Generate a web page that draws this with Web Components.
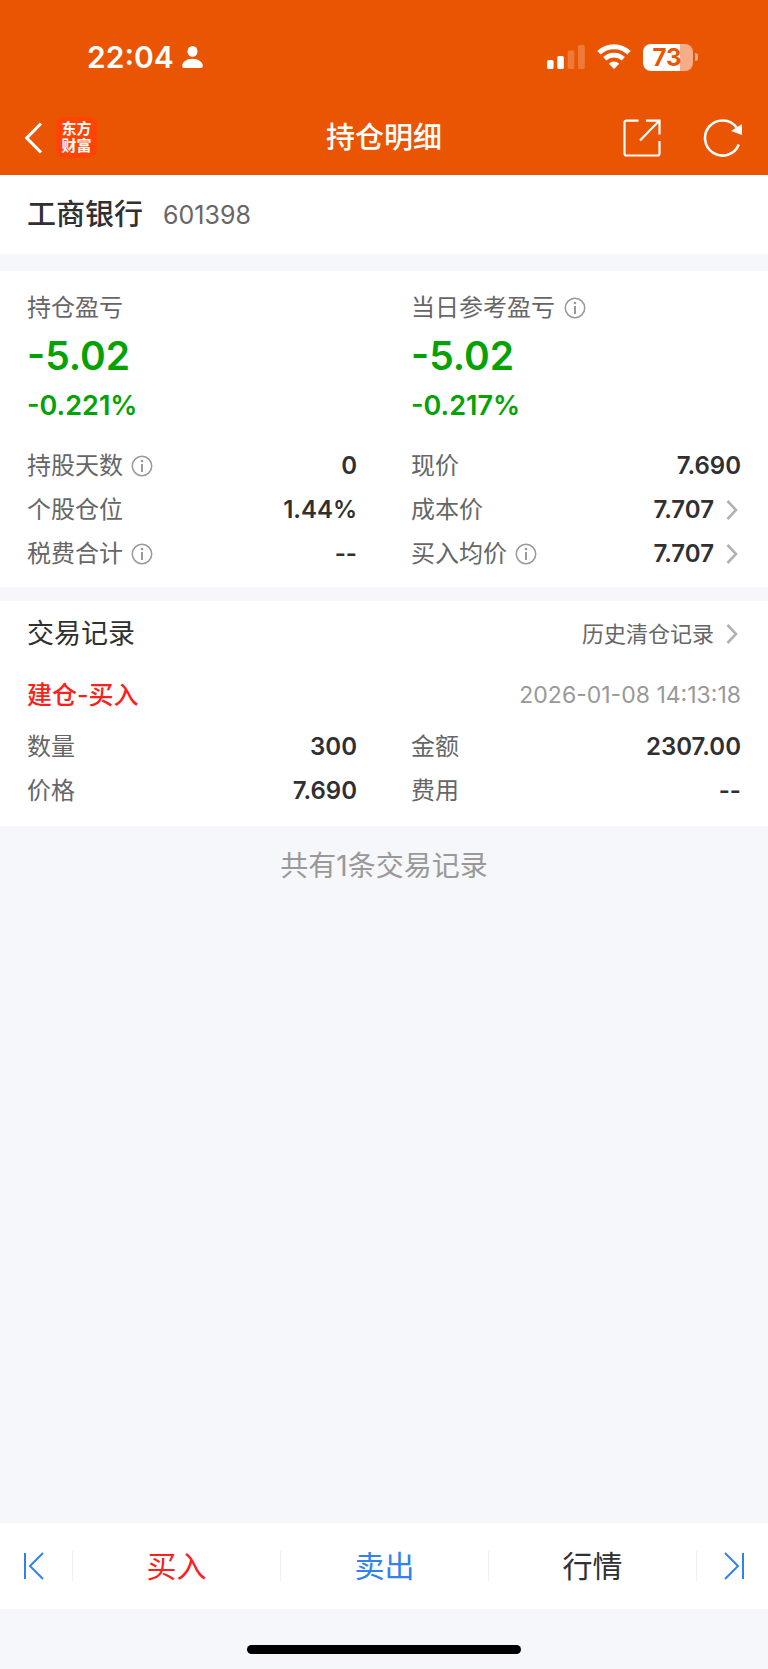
<!DOCTYPE html>
<html lang="zh-CN">
<head>
<meta charset="utf-8">
<meta name="viewport" content="width=device-width, initial-scale=1">
<title>持仓明细</title>
<style>
    :root{
        --orange: #ea5503;
        --green: #04a204;
        --red: #fb1f20;
        --blue: #3182ec;
        --bg: #f6f7fa;
        --text: #303030;
        --label: #666;
        --muted: #999;
    }
    body{
        margin: 0;
        min-height: 100vh;
        display: flex;
        flex-direction: column;
        background: var(--bg);
        color: var(--text);
        font-family: Inter, "Noto Sans CJK SC", sans-serif;
        font-size: 24px;
        line-height: 36px;
    }
    main{
        flex: 1;
    }
</style>
</head>
<body>
<status-bar hora="22:04" bateria="73"></status-bar>
<nav-bar>持仓明细</nav-bar>
<main>
    <stock-title codigo="601398">工商银行</stock-title>
    <info-card>
        <two-columns>
            <profit-figure titulo="持仓盈亏" valor="-5.02" porcentaje="-0.221%"></profit-figure>
            <profit-figure titulo="当日参考盈亏" valor="-5.02" porcentaje="-0.217%" info></profit-figure>
        </two-columns>
        <two-columns>
            <data-row titulo="持股天数" valor="0" info></data-row>
            <data-row titulo="现价" valor="7.690"></data-row>
            <data-row titulo="个股仓位" valor="1.44%"></data-row>
            <data-row titulo="成本价" valor="7.707" enlace></data-row>
            <data-row titulo="税费合计" valor="--" info></data-row>
            <data-row titulo="买入均价" valor="7.707" info enlace></data-row>
        </two-columns>
    </info-card>
    <trade-list titulo="交易记录" historial="历史清仓记录">
        <trade-record tipo="建仓-买入" fecha="2026-01-08 14:13:18">
            <data-row titulo="数量" valor="300"></data-row>
            <data-row titulo="金额" valor="2307.00"></data-row>
            <data-row titulo="价格" valor="7.690"></data-row>
            <data-row titulo="费用" valor="--"></data-row>
        </trade-record>
        <span slot="total">共有1条交易记录</span>
    </trade-list>
</main>
<tab-bar>
    <tab-item color="red">买入</tab-item>
    <tab-item color="blue">卖出</tab-item>
    <tab-item color="text">行情</tab-item>
</tab-bar>
<home-indicator></home-indicator>

<script>
const reset = `
    *{ box-sizing: border-box; }
    button{ margin: 0; padding: 0; border: 0; background: none; color: inherit; font: inherit; cursor: pointer; }
    a{ color: inherit; text-decoration: none; }
    svg{ display: block; flex: none; }
`;

const chevron = `
    <svg width="15" height="20" viewBox="0 0 15 20" fill="none" stroke="#b2b2b2" stroke-width="2.6" aria-hidden="true">
        <path d="M1.5 1L10 10L1.5 19"/>
    </svg>`;

class BaseElement extends HTMLElement{
    constructor(){
        super();
        this.attachShadow({mode: "open"});
    }
    attr(name){
        return this.getAttribute(name) || "";
    }
    connectedCallback(){
        const template = document.createElement('template');
        template.innerHTML = `<style>${reset}${this.getStyle()}</style>${this.getTemplate()}`;
        this.shadowRoot.replaceChildren(template.content.cloneNode(true));
    }
}

class StatusBar extends BaseElement{
    getTemplate(){
        return `
            <div class="group left">
                <time>${this.attr('hora')}</time>
                <svg width="21" height="22" viewBox="0 0 21 22" fill="#fff" aria-hidden="true">
                    <ellipse cx="10.5" cy="5.4" rx="5" ry="5.4"/>
                    <path d="M2.2 22Q.2 22 .2 20C.2 16.4 4.5 12.8 10.5 12.8S20.8 16.4 20.8 20Q20.8 22 18.8 22Z"/>
                </svg>
            </div>
            <div class="group right">
                <svg width="38" height="26" viewBox="0 0 38 26" fill="#fff" aria-hidden="true">
                    <rect x="0" y="16" width="6.6" height="9" rx="1.6"/>
                    <rect x="10.3" y="12" width="6.6" height="13" rx="1.6"/>
                    <rect x="20.7" y="6.5" width="6.6" height="18.5" rx="1.6" opacity=".22"/>
                    <rect x="31" y="1" width="6.8" height="24" rx="1.6" opacity=".22"/>
                </svg>
                <svg width="34" height="26" viewBox="0 0 34 26" fill="none" stroke="#fff" aria-hidden="true">
                    <path d="M2 8.8A21.5 21.5 0 0 1 32 8.8" stroke-width="5"/>
                    <path d="M7.7 14.8A13.7 13.7 0 0 1 26.3 14.8" stroke-width="4.6"/>
                    <path d="M17 25L11.8 19.7Q17 15.5 22.2 19.7Z" fill="#fff" stroke="none"/>
                </svg>
                <div class="battery"><b>${this.attr('bateria')}</b><i></i></div>
            </div>`;
    }
    getStyle(){
        return `
            :host{
                display: flex;
                justify-content: space-between;
                padding: 42px 70px 0 87px;
                background: var(--orange);
                color: #fff;
            }
            .group{ display: flex; align-items: center; height: 30px; }
            .left{ gap: 8px; }
            .right{ gap: 12px; }
            time{ font-size: 30px; line-height: 30px; font-weight: 600; }
            .battery{ display: flex; align-items: center; gap: 2px; }
            b{
                width: 50px;
                height: 27px;
                padding-right: 2px;
                border-radius: 8px;
                text-align: center;
                font-size: 24px;
                line-height: 27px;
                font-weight: 700;
                color: var(--orange);
                background: linear-gradient(90deg, #fff ${this.attr('bateria')}%, #f5ad87 0);
            }
            i{ width: 3px; height: 8px; border-radius: 0 3px 3px 0; background: #f5ad87; }
        `;
    }
}

class NavBar extends BaseElement{
    getTemplate(){
        return `
            <div class="side">
                <button aria-label="返回">
                    <svg width="18" height="32" viewBox="0 0 18 32" fill="none" stroke="#fff" stroke-width="3.2" aria-hidden="true">
                        <path d="M16 1.5L1.8 16L16 30.5"/>
                    </svg>
                </button>
                <a class="logo" href="#">东方<br>财富</a>
            </div>
            <h1><slot></slot></h1>
            <div class="side actions">
                <button aria-label="分享">
                    <svg width="38" height="38" viewBox="0 0 38 38" fill="none" stroke="#fff" stroke-width="2.2" aria-hidden="true">
                        <path d="M15.5 1.6H3.5Q1.5 1.6 1.5 3.6V34.500Q1.5 36.5 3.5 36.5H34.5Q36.5 36.5 36.5 34.5V22"/>
                        <path d="M23 1.6H36.5V15.5M36 2L17 21.5"/>
                    </svg>
                </button>
                <button aria-label="刷新">
                    <svg width="40" height="40" viewBox="0 0 40 40" fill="none" stroke="#fff" stroke-width="2.6" aria-hidden="true">
                        <path d="M35.8 26.5A17.5 17.5 0 1 1 33.5 9.5"/>
                        <path d="M39 6V17L28 13Z" fill="#fff" stroke="none"/>
                    </svg>
                </button>
            </div>`;
    }
    getStyle(){
        return `
            :host{
                display: grid;
                grid-template-columns: 1fr auto 1fr;
                align-items: center;
                padding: 45px 25px 17px;
                background: var(--orange);
                color: #fff;
            }
            .side{ display: flex; align-items: center; gap: 13px; }
            .actions{ justify-content: flex-end; gap: 42px; }
            h1{ margin: 0; font-size: 29px; line-height: 41px; font-weight: 500; }
            .logo{
                width: 41px;
                height: 41px;
                padding-top: 3px;
                border-radius: 8px;
                background: #ff4301;
                text-align: center;
                font-size: 15px;
                line-height: 17px;
                font-weight: 700;
            }
        `;
    }
}

class StockTitle extends BaseElement{
    getTemplate(){
        return `<h2><slot></slot></h2><span>${this.attr('codigo')}</span>`;
    }
    getStyle(){
        return `
            :host{ display: flex; align-items: center; gap: 20px; padding: 20px 27px 19px; background: #fff; }
            h2{ margin: 0; font-size: 29px; line-height: 40px; font-weight: 500; }
            span{ font-size: 25px; color: var(--label); }
        `;
    }
}

class InfoCard extends BaseElement{
    getTemplate(){
        return `<slot></slot>`;
    }
    getStyle(){
        return `
            :host{ display: grid; gap: 18px; margin: 17px 0 14px; padding: 19px 27px 11px; background: #fff; }
        `;
    }
}

class TwoColumns extends BaseElement{
    getTemplate(){
        return `<slot></slot>`;
    }
    getStyle(){
        return `
            :host{ display: grid; grid-template-columns: 1fr 1fr; column-gap: 54px; }
        `;
    }
}

class InfoButton extends BaseElement{
    getTemplate(){
        return `
            <button aria-label="说明">
                <svg width="22" height="22" viewBox="0 0 22 22" fill="none" stroke="#999" aria-hidden="true">
                    <circle cx="11" cy="11" r="9.7" stroke-width="1.5"/>
                    <path d="M11 9V17" stroke-width="2"/>
                    <circle cx="11" cy="6" r="1.3" fill="#999" stroke="none"/>
                </svg>
            </button>`;
    }
    getStyle(){
        return `:host{ display: flex; }`;
    }
}

class ProfitFigure extends BaseElement{
    getTemplate(){
        return `
            <div class="label">${this.attr('titulo')}${this.hasAttribute('info') ? '<info-button></info-button>' : ''}</div>
            <div class="value">${this.attr('valor')}</div>
            <div class="percent">${this.attr('porcentaje')}</div>`;
    }
    getStyle(){
        return `
            :host{ display: block; color: var(--green); font-weight: 600; }
            .label{ display: flex; align-items: center; gap: 9px; color: var(--label); font-weight: 400; }
            .value{ font-size: 39px; line-height: 60px; }
            .percent{ font-size: 27px; line-height: 40px; }
        `;
    }
}

class DataRow extends BaseElement{
    getTemplate(){
        const valor = this.hasAttribute('enlace')
            ? `<a href="#" aria-labelledby="titulo">${this.attr('valor')}${chevron}</a>`
            : `<span class="value" aria-labelledby="titulo">${this.attr('valor')}</span>`;
        return `
            <span class="label"><span id="titulo">${this.attr('titulo')}</span>${this.hasAttribute('info') ? '<info-button></info-button>' : ''}</span>
            ${valor}`;
    }
    getStyle(){
        return `
            :host{ display: flex; align-items: center; justify-content: space-between; height: 44px; }
            .label{ display: flex; align-items: center; gap: 8px; color: var(--label); }
            .value, a{ font-weight: 600; }
            a{ display: flex; align-items: center; gap: 12px; }
        `;
    }
}

class TradeList extends BaseElement{
    getTemplate(){
        return `
            <section>
                <header>
                    <h2>${this.attr('titulo')}</h2>
                    <a href="#">${this.attr('historial')}${chevron}</a>
                </header>
                <slot></slot>
            </section>
            <p><slot name="total"></slot></p>`;
    }
    getStyle(){
        return `
            :host{ display: block; }
            section{ padding: 13px 27px; background: #fff; }
            header{ display: flex; align-items: center; justify-content: space-between; }
            h2{ margin: 0; font-size: 27px; line-height: 40px; font-weight: 400; }
            a{ display: flex; align-items: center; gap: 12px; font-size: 22px; color: var(--label); }
            p{ margin: 0; padding: 20px 0; text-align: center; font-size: 28px; line-height: 40px; color: var(--muted); }
        `;
    }
}

class TradeRecord extends BaseElement{
    getTemplate(){
        return `
            <header>
                <h3>${this.attr('tipo')}</h3>
                <time>${this.attr('fecha')}</time>
            </header>
            <slot></slot>`;
    }
    getStyle(){
        return `
            :host{ display: block; padding-top: 21px; }
            header{ display: flex; align-items: center; justify-content: space-between; padding-bottom: 10px; }
            h3{ margin: 0; font-size: 25px; line-height: 40px; font-weight: 500; color: var(--red); }
            time{ font-size: 23px; color: var(--muted); }
            slot{ display: grid; grid-template-columns: 1fr 1fr; column-gap: 54px; }
        `;
    }
}

class TabBar extends BaseElement{
    getTemplate(){
        return `
            <nav>
                <button aria-label="第一个">
                    <svg width="22" height="28" viewBox="0 0 22 28" fill="none" stroke="var(--blue)" stroke-width="2" aria-hidden="true">
                        <path d="M2 1V27M20 1L7 14L20 27"/>
                    </svg>
                </button>
                <slot></slot>
                <button class="last" aria-label="最后一个">
                    <svg width="22" height="28" viewBox="0 0 22 28" fill="none" stroke="var(--blue)" stroke-width="2" aria-hidden="true">
                        <path d="M20 1V27M2 1L15 14L2 27"/>
                    </svg>
                </button>
            </nav>`;
    }
    getStyle(){
        return `
            :host{ display: block; background: #fff; }
            nav{ display: grid; grid-template-columns: 72px 1fr 1fr 1fr 72px; align-items: center; height: 86px; }
            button{ height: 30px; padding-left: 23px; }
            .last{ padding-left: 26px; border-left: 1px solid #eee; }
        `;
    }
}

class TabItem extends BaseElement{
    getTemplate(){
        return `<button><slot></slot></button>`;
    }
    getStyle(){
        return `
            :host{ display: block; border-left: 1px solid #eee; color: var(--${this.attr('color')}); }
            button{ display: block; width: 100%; font-size: 30px; line-height: 30px; }
        `;
    }
}

class HomeIndicator extends BaseElement{
    getTemplate(){
        return `<div></div>`;
    }
    getStyle(){
        return `
            :host{ display: block; padding: 36px 0 15px; }
            div{ width: 274px; height: 9px; margin: 0 auto; border-radius: 5px; background: #000; }
        `;
    }
}

customElements.define('status-bar',StatusBar);
customElements.define('nav-bar',NavBar);
customElements.define('stock-title',StockTitle);
customElements.define('info-card',InfoCard);
customElements.define('two-columns',TwoColumns);
customElements.define('info-button',InfoButton);
customElements.define('profit-figure',ProfitFigure);
customElements.define('data-row',DataRow);
customElements.define('trade-list',TradeList);
customElements.define('trade-record',TradeRecord);
customElements.define('tab-bar',TabBar);
customElements.define('tab-item',TabItem);
customElements.define('home-indicator',HomeIndicator);
</script>
</body>
</html>
